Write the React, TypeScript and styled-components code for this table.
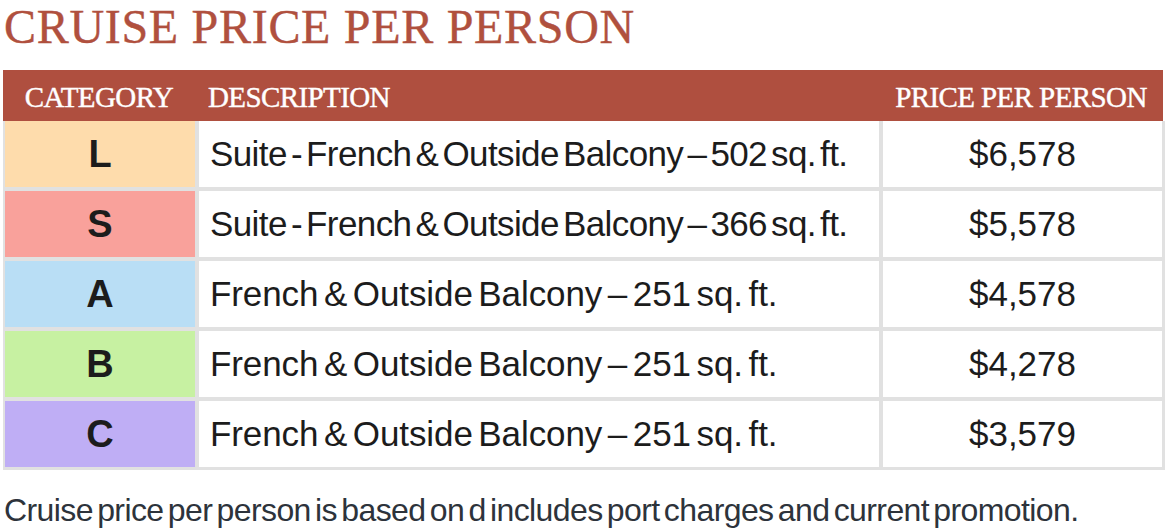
import { Fragment } from 'react';
import styled, { createGlobalStyle } from 'styled-components';

const GlobalStyle = createGlobalStyle`
  body {
    margin: 0;
    background: #ffffff;
    font-family: "Liberation Sans", Arial, sans-serif;
  }
`;

const Page = styled.div`
  width: 1170px;
  height: 531px;
  overflow: hidden;
  padding: 0 0 0 3px;
  box-sizing: border-box;
`;

const Title = styled.h1`
  margin: 0 0 17px 1px;
  font-family: "Liberation Serif", "Times New Roman", serif;
  font-weight: 400;
  font-size: 48px;
  line-height: 53px;
  letter-spacing: 0.7px;
  color: #b0503e;
  -webkit-text-stroke: 0.4px #b0503e;
`;

const Table = styled.div`
  width: 1162px;
`;

const HeaderRow = styled.div`
  display: grid;
  grid-template-columns: 192px 684px 1fr;
  height: 51px;
  align-items: center;
  background: #af4f3f;
  color: #ffffff;
  font-family: "Liberation Serif", "Times New Roman", serif;
  font-size: 29px;
  letter-spacing: -0.6px;
  -webkit-text-stroke: 0.4px #ffffff;
  margin-right: 2px;
`;

const HeaderCell = styled.div<{ $align: 'left' | 'center' }>`
  text-align: ${(p) => p.$align};
  padding-left: ${(p) => (p.$align === 'left' ? '13px' : '0')};
  padding-top: 3px;
  white-space: nowrap;
`;

const Body = styled.div`
  display: grid;
  grid-template-columns: 190px 680px 1fr;
  grid-auto-rows: 66px;
  gap: 4px;
  padding: 0 3px 3px 2px;
  background: #e1e1e1;
`;

const CategoryCell = styled.div<{ $bg: string }>`
  display: flex;
  align-items: center;
  justify-content: center;
  background: ${(p) => p.$bg};
  font-weight: 700;
  font-size: 38px;
  color: #1c1c1c;
`;

const DescCell = styled.div<{ $tight: boolean }>`
  display: flex;
  align-items: center;
  padding-left: 11px;
  background: #ffffff;
  font-size: 35px;
  letter-spacing: ${(p) => (p.$tight ? '-0.6px' : '-0.1px')};
  word-spacing: ${(p) => (p.$tight ? '-5px' : '-4px')};
  color: #1c1c1c;
  white-space: nowrap;
`;

const PriceCell = styled.div`
  display: flex;
  align-items: center;
  justify-content: center;
  background: #ffffff;
  font-size: 35px;
  color: #1c1c1c;
`;

const Note = styled.p`
  margin: 20px 0 0 1px;
  font-size: 32px;
  line-height: 40px;
  letter-spacing: -0.6px;
  word-spacing: -4px;
  color: #2d333b;
  white-space: nowrap;
`;

const rows = [
  { cat: 'L', bg: '#fedcac', desc: 'Suite - French & Outside Balcony – 502 sq. ft.', price: '$6,578', tight: true },
  { cat: 'S', bg: '#f9a19b', desc: 'Suite - French & Outside Balcony – 366 sq. ft.', price: '$5,578', tight: true },
  { cat: 'A', bg: '#b9def5', desc: 'French & Outside Balcony – 251 sq. ft.', price: '$4,578', tight: false },
  { cat: 'B', bg: '#c7f1a2', desc: 'French & Outside Balcony – 251 sq. ft.', price: '$4,278', tight: false },
  { cat: 'C', bg: '#bfaef5', desc: 'French & Outside Balcony – 251 sq. ft.', price: '$3,579', tight: false },
];

const App = () => {
  return (
    <Page>
      <GlobalStyle />
      <Title>CRUISE PRICE PER PERSON</Title>
      <Table>
        <HeaderRow>
          <HeaderCell $align="center">CATEGORY</HeaderCell>
          <HeaderCell $align="left">DESCRIPTION</HeaderCell>
          <HeaderCell $align="center">PRICE PER PERSON</HeaderCell>
        </HeaderRow>
        <Body>
          {rows.map((row) => (
            <Fragment key={row.cat}>
              <CategoryCell $bg={row.bg}>{row.cat}</CategoryCell>
              <DescCell $tight={row.tight}>{row.desc}</DescCell>
              <PriceCell>{row.price}</PriceCell>
            </Fragment>
          ))}
        </Body>
      </Table>
      <Note>Cruise price per person is based on d includes port charges and current promotion.</Note>
    </Page>
  );
};

export default App;
